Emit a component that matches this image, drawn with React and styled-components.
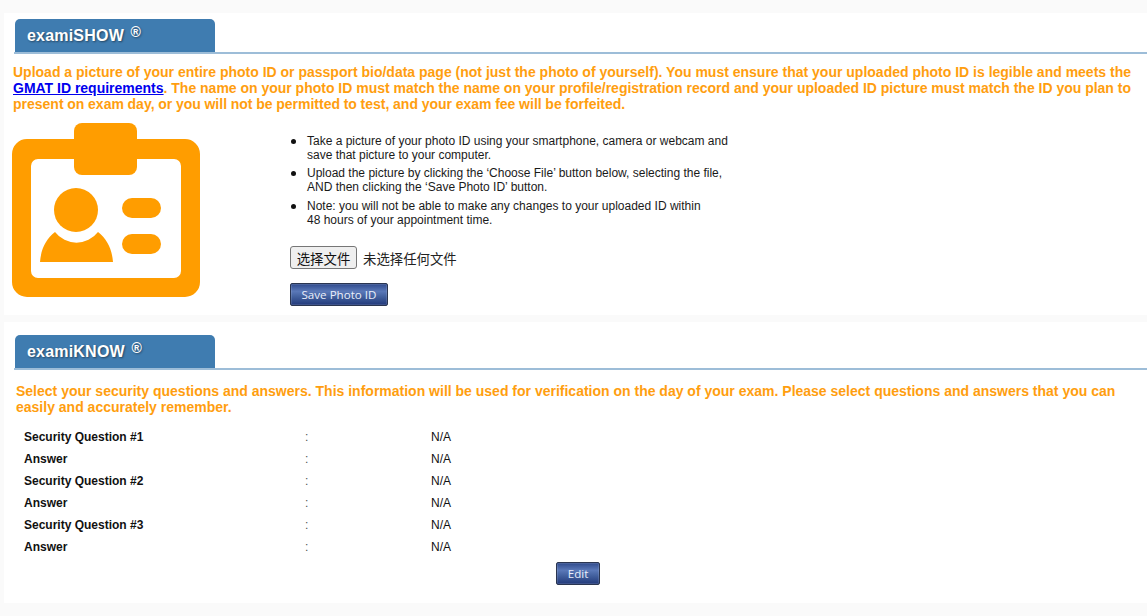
import React from 'react';
import styled, { createGlobalStyle } from 'styled-components';

const GlobalStyle = createGlobalStyle`
    html, body {
        margin: 0;
        padding: 0;
        background: #fafafa;
    }
    body {
        font-family: "Liberation Sans", Arial, sans-serif;
    }
`;

const Page = styled.div`
    width: 1147px;
    height: 616px;
    overflow: hidden;
    padding-top: 13px;
    box-sizing: border-box;
`;

const Panel = styled.section`
    background: #fff;
    margin-left: 4px;
    height: ${(p) => p.$height}px;
    margin-bottom: ${(p) => p.$gap}px;
    padding-top: ${(p) => p.$pad}px;
    box-sizing: border-box;
`;

const TabBar = styled.div`
    margin-left: 10px;
    border-bottom: 2px solid #9dbdd8;
    height: 33px;
    padding-left: 1px;
`;

const Tab = styled.h2`
    margin: 0;
    width: 200px;
    height: 33px;
    box-sizing: border-box;
    background: #3f7cb0;
    border-radius: 5px 5px 0 0;
    color: #fff;
    font-size: 16px;
    font-weight: bold;
    letter-spacing: 0.2px;
    line-height: 33px;
    padding-left: 12px;
    text-shadow: 1px 1px 2px rgba(0, 0, 0, 0.45);
    sup {
        font-size: 14px;
        font-weight: bold;
        line-height: 0;
        vertical-align: 4px;
        margin-left: 2px;
    }
`;

const Notice = styled.p`
    margin: ${(p) => p.$top}px 16px 0 ${(p) => p.$left}px;
    color: #ff9e0f;
    font-size: 14px;
    font-weight: bold;
    line-height: 16px;
    word-spacing: ${(p) => (p.$justify ? '-0.2px' : '0')};
    text-align: ${(p) => (p.$justify ? 'justify' : 'left')};
    a {
        color: #0000ee;
    }
`;

const UploadRow = styled.div`
    display: flex;
    margin: 11px 0 0 8px;
`;

const IdIcon = styled.svg`
    width: 190px;
    height: 176px;
    flex: none;
`;

const UploadBody = styled.div`
    margin-left: 88px;
    padding-top: 11px;
`;

const Steps = styled.ul`
    margin: 0;
    padding: 0;
    width: 460px;
    list-style: none;
    font-size: 12px;
    line-height: 14px;
    color: #1a1a1a;
`;

const Step = styled.li`
    display: flex;
    margin-bottom: 5px;
    &:first-child {
        margin-bottom: 4px;
    }
`;

const Bullet = styled.span`
    flex: none;
    width: 5px;
    height: 5px;
    margin: 5px 11px 0 1px;
    border-radius: 50%;
    background: #111;
`;

const FileRow = styled.div`
    display: flex;
    align-items: center;
    margin-top: 19px;
    font-family: "Noto Sans CJK SC", sans-serif;
    font-size: 13.4px;
    color: #222;
`;

const FileButton = styled.button`
    width: 67px;
    height: 23px;
    padding: 0;
    margin-right: 6px;
    background: #efefef;
    border: 1px solid #767676;
    border-radius: 3px;
    font-family: inherit;
    font-size: 13.4px;
    color: #111;
`;

const ActionButton = styled.button`
    display: block;
    width: ${(p) => p.$width}px;
    height: 23px;
    padding: 0;
    background: linear-gradient(#2f4a8c 0%, #5a78b8 35%, #43619f 60%, #22397a 100%);
    border: 1px solid #2a3550;
    border-radius: 2px;
    box-shadow: inset 0 0 0 1px rgba(255, 255, 255, 0.12);
    color: #e9eefa;
    font-family: "Open Sans", sans-serif;
    font-size: 11.6px;
    line-height: 20px;
`;

const SaveButton = styled(ActionButton)`
    margin-top: 14px;
`;

const Questions = styled.div`
    margin: 11px 0 0 20px;
    display: grid;
    grid-template-columns: 281px 126px 1fr;
    grid-auto-rows: 22px;
    align-items: center;
    font-size: 12px;
    color: #111;
`;

const Label = styled.div`
    font-weight: bold;
`;

const Colon = styled.div`
    color: #555;
`;

const EditRow = styled.div`
    display: flex;
    justify-content: center;
    margin: 4px 0 0;
    padding-left: 5px;
    box-sizing: border-box;
`;

const questionRows = [
    'Security Question #1',
    'Answer',
    'Security Question #2',
    'Answer',
    'Security Question #3',
    'Answer',
];

const BadgeIcon = () => (
    <IdIcon viewBox="0 0 190 176" aria-hidden="true">
        <path
            fill="#ff9d00"
            fillRule="evenodd"
            d="M15 16H173a15 15 0 0 1 15 15V159a15 15 0 0 1 -15 15H15a15 15 0 0 1 -15 -15V31a15 15 0 0 1 15 -15ZM26 36a7 7 0 0 0 -7 7V148a7 7 0 0 0 7 7H162a7 7 0 0 0 7 -7V43a7 7 0 0 0 -7 -7Z"
        />
        <rect x="62" y="0" width="63" height="52" rx="8" fill="#ff9d00" />
        <circle cx="64" cy="87" r="22" fill="#ff9d00" />
        <path fill="#ff9d00" d="M28 139C29 126 34 116 43 109A27 27 0 0 0 86 109C95 116 100 126 101 139Z" />
        <rect x="110" y="75" width="39" height="20" rx="10" fill="#ff9d00" />
        <rect x="110" y="111" width="39" height="20" rx="10" fill="#ff9d00" />
    </IdIcon>
);

const stepLines = [
    ['Take a picture of your photo ID using your smartphone, camera or webcam and', 'save that picture to your computer.'],
    ['Upload the picture by clicking the ‘Choose File’ button below, selecting the file,', 'AND then clicking the ‘Save Photo ID’ button.'],
    ['Note: you will not be able to make any changes to your uploaded ID within', '48 hours of your appointment time.'],
];

export default function App() {
    return (
        <Page>
            <GlobalStyle />
            <Panel $height={302} $gap={7} $pad={6}>
                <TabBar>
                    <Tab>examiSHOW <sup>®</sup></Tab>
                </TabBar>
                <Notice $top={10} $left={9} $justify>
                    Upload a picture of your entire photo ID or passport bio/data page (not just the photo of yourself). You must ensure that your uploaded photo ID is legible and meets the{' '}
                    <a href="#gmat">GMAT ID requirements</a>. The name on your photo ID must match the name on your profile/registration record and your uploaded ID picture must match the ID you plan to present on exam day, or you will not be permitted to test, and your exam fee will be forfeited.
                </Notice>
                <UploadRow>
                    <BadgeIcon />
                    <UploadBody>
                        <Steps>
                            {stepLines.map((lines, i) => (
                                <Step key={i}>
                                    <Bullet />
                                    <div>{lines[0]}<br />{lines[1]}</div>
                                </Step>
                            ))}
                        </Steps>
                        <FileRow>
                            <FileButton type="button">选择文件</FileButton>
                            未选择任何文件
                        </FileRow>
                        <SaveButton type="button" $width={98}>Save Photo ID</SaveButton>
                    </UploadBody>
                </UploadRow>
            </Panel>
            <Panel $height={281} $gap={0} $pad={13}>
                <TabBar>
                    <Tab>examiKNOW <sup>®</sup></Tab>
                </TabBar>
                <Notice $top={13} $left={12}>
                    Select your security questions and answers. This information will be used for verification on the day of your exam. Please select questions and answers that you can easily and accurately remember.
                </Notice>
                <Questions>
                    {questionRows.map((label, i) => (
                        <React.Fragment key={i}>
                            <Label>{label}</Label>
                            <Colon>:</Colon>
                            <div>N/A</div>
                        </React.Fragment>
                    ))}
                </Questions>
                <EditRow>
                    <ActionButton type="button" $width={44}>Edit</ActionButton>
                </EditRow>
            </Panel>
        </Page>
    );
}
